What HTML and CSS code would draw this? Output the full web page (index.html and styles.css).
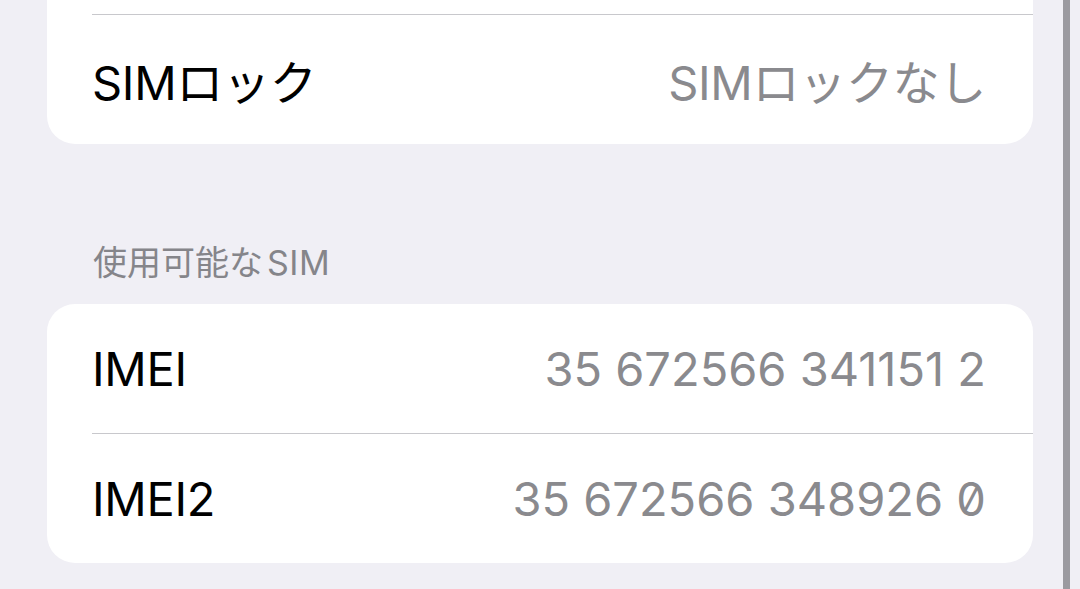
FILE: index.html
```html
<!DOCTYPE html>
<html lang="ja">
<head>
<meta charset="utf-8">
<link rel="stylesheet" href="styles.css">
</head>
<body>
<div class="screen">
  <main class="content">
    <section class="card card-top">
      <div class="row"><span class="label"></span><span class="value"></span></div>
      <div class="row"><span class="label">SIMロック</span><span class="value">SIMロックなし</span></div>
    </section>
    <h2 class="section-header">使用可能な<span class="latin">SIM</span></h2>
    <section class="card">
      <div class="row"><span class="label">IMEI</span><span class="value num">35 672566 341151 2</span></div>
      <div class="row"><span class="label">IMEI2</span><span class="value num">35 672566 348926 0</span></div>
    </section>
  </main>
  <div class="scrollbar"></div>
</div>
</body>
</html>
```
FILE: styles.css
```css
html, body {
  margin: 0;
  padding: 0;
}
body {
  width: 1080px;
  height: 589px;
  overflow: hidden;
  background: #f0eff5;
  font-family: Inter, "Noto Sans CJK JP", sans-serif;
}
.screen {
  display: flex;
  height: 589px;
}
.content {
  width: 986px;
  padding-left: 47px;
  flex: none;
}
.card {
  background: #ffffff;
  border-radius: 28px;
  overflow: hidden;
}
.card-top {
  margin-top: -115px;
}
.row {
  display: flex;
  align-items: center;
  justify-content: space-between;
  height: 129px;
  margin-left: 45px;
  padding-right: 47px;
}
.row + .row {
  border-top: 1px solid #c8c8cc;
}
.label {
  font-size: 47px;
  color: #000;
  letter-spacing: -0.3px;
}
.value {
  font-size: 47px;
  color: #8a8a8e;
  letter-spacing: -0.3px;
}
.num {
  font-feature-settings: "zero" 1;
  letter-spacing: 0;
}
.section-header {
  margin: 0;
  padding: 99px 0 21px 46px;
  font-size: 34px;
  line-height: 40px;
  font-weight: 400;
  color: #85858a;
}
.section-header .latin {
  margin-left: 4px;
  letter-spacing: 0.5px;
}
.scrollbar {
  width: 7px;
  height: 100%;
  margin-left: 30px;
  background: #9b9aa0;
  flex: none;
}
```
